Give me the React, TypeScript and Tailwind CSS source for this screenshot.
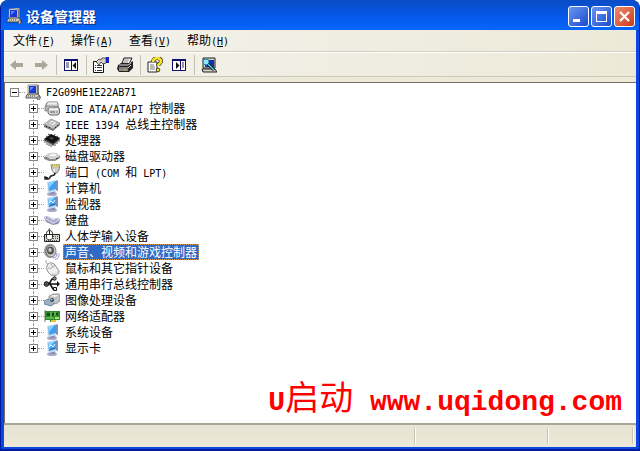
import { ReactNode, useState } from "react";

type DeviceNode = {
    label: string;
    icon: ReactNode;
};

const menus = [
    { label: "文件", key: "F" },
    { label: "操作", key: "A" },
    { label: "查看", key: "V" },
    { label: "帮助", key: "H" },
];

const Icon = ({ children }: { children: ReactNode }) => (
    <svg viewBox="0 0 16 16" className="size-4 shrink-0" aria-hidden="true">
        {children}
    </svg>
);

const PcIcon = () => (
    <Icon>
        <path d="M3 1l9-1 2 1v9l-2 1H3z" fill="#d8d5c8" />
        <path d="M13 1v10h-2" stroke="#222" fill="none" />
        <path d="M3 1h9v9H3z" fill="#e8e6dc" stroke="#777" strokeWidth=".7" />
        <path d="M4 2h7v7H4z" fill="#1838d8" />
        <path d="M5 3h4L5 7z" fill="#5c8cf8" />
        <path d="M1 12l2-2h10l2 2v2H1z" fill="#d0cdc0" stroke="#333" strokeWidth=".8" />
        <path d="M3 12h8" stroke="#555" strokeDasharray="1 1" />
        <path d="M12 15c0-3 3-4 3-1s-2 2-3 1" fill="#bbb" stroke="#333" strokeWidth=".7" />
    </Icon>
);

const IdeIcon = () => (
    <Icon>
        <path d="M2 6V4l2-2h9l1 2v3H2z" fill="#dcdcdc" stroke="#777" />
        <path d="M4 3h9" stroke="#fff" />
        <path d="M4 9l2-2h8l1.500 2v4L14 15H6l-2-2z" fill="#d6d6d6" stroke="#666" />
        <path d="M1 6h10v2H5l-2 3H1z" fill="#b4b4b4" stroke="#777" strokeWidth=".7" />
        <path d="M5 9h9" stroke="#fff" />
        <path d="M6 12h5" stroke="#555" />
        <path d="M12 12h2" stroke="#3aa83a" />
    </Icon>
);

const FirewireIcon = () => (
    <Icon>
        <path d="M0 9l7-6 9 4v2l-7 6-9-4z" fill="#777" />
        <path d="M0 8l7-5 9 4-7 6z" fill="#c4c4c4" stroke="#888" strokeWidth=".5" />
        <path d="M4 7l4-3 5 3-4 3z" fill="#eee" stroke="#999" strokeWidth=".6" />
        <path d="M2 10l1 1M5 11l1 1M11 12l1-1M13 10l1-1" stroke="#222" />
        <path d="M6 7l2-1 2 1-2 1z" fill="#aaa" />
    </Icon>
);

const CpuIcon = () => (
    <Icon>
        <path d="M1 8v3M3 9v4M5 10v4M7 11v4M9 12v2M11 10v4M13 8v4M15 7v3" stroke="#555" />
        <path d="M0 7l7-5 9 4-7 6z" fill="#111" />
        <path d="M0 7v1l9 5 7-6V6l-7 6z" fill="#333" />
        <path d="M2 4l2 1M4 2l2 1M11 2l-1 2M14 4l-2 1" stroke="#444" />
        <path d="M5 6l2-1 3 1-2 2z" fill="#444" />
    </Icon>
);

const DiskIcon = () => (
    <Icon>
        <path d="M0 9l5-4h7l4 3v2l-5 3H5L0 11z" fill="#8c8c8c" />
        <path d="M0 8l5-3h7l4 3-5 3H5z" fill="#d4d4d4" />
        <ellipse cx="9" cy="7" rx="4" ry="2" fill="#f4f4f4" stroke="#aaa" strokeWidth=".5" />
        <path d="M2 9l3 2" stroke="#666" />
        <path d="M12 11l2-1" stroke="#3b3b3b" />
    </Icon>
);

const PortIcon = () => (
    <Icon>
        <path d="M7 1h9l-1 5-2 3h-3L8 6z" fill="#cfcfcf" stroke="#666" strokeWidth=".8" />
        <path d="M7 0h9l-1 3H8z" fill="#f0e440" stroke="#999" strokeWidth=".5" />
        <path d="M8 1h7" stroke="#777" strokeDasharray="1 1" />
        <path d="M10 5v3" stroke="#fff" />
        <path d="M11 9c0 3-2 2-4 3s0 3-3 3H1v-2l3 1" fill="none" stroke="#222" strokeWidth="1.500" />
    </Icon>
);

const MonitorIcon = ({ glare }: { glare?: boolean }) => (
    <Icon>
        <ellipse cx="8" cy="14" rx="5" ry="2" fill="#a9a9c6" />
        <path d="M6 11h5v3H6z" fill="#8d8db4" />
        <path d="M3 2l9-2 2 1v10l-10 2z" fill="#c9d9ee" />
        <path d="M12 0l2 1v10l-2-1z" fill="#7b93bd" />
        <path d="M4 3l8-2v8l-7 2z" fill="#3aa0f0" />
        <path d="M4 3l7-2-6 7z" fill="#8dd2fc" />
        {glare && <path d="M5 7l2-2 2 2 2-3" fill="none" stroke="#fff" />}
        {glare && <path d="M6 10l5-2" stroke="#245daa" />}
    </Icon>
);

const KeyboardIcon = () => (
    <Icon>
        <path d="M0 5l3-1 6 3 6-1 1 3-2 3-5 1-7-3z" fill="#8b8bb5" />
        <path d="M0 5l3-1 6 3 6-1v3l-6 3-7-4z" fill="#cfcfe6" />
        <path d="M2 6l7 4 5-2M2 5l7 4 5-2" fill="none" stroke="#7777a5" strokeWidth=".7" strokeDasharray="1 .7" />
    </Icon>
);

const HidIcon = () => (
    <Icon>
        <path d="M.500 6.500h15v7H.500z" fill="#d8d8d0" stroke="#222" />
        <path d="M9 8.500h6M9 10.500h6M2 12.500h12" stroke="#555" strokeDasharray="1 1" />
        <path d="M5 3V1h1" fill="none" stroke="#333" />
        <path d="M2.500 5.500c0-4 6-4 6 0v4c0 3-6 3-6 0z" fill="#fff" stroke="#222" />
        <path d="M2.500 6.500h6M5.500 3v3.500" stroke="#222" />
    </Icon>
);

const SpeakerIcon = () => (
    <Icon>
        <ellipse cx="6" cy="7" rx="6" ry="7" fill="#999" />
        <ellipse cx="7" cy="7" rx="5" ry="6" fill="#d0d0d0" stroke="#555" strokeWidth=".7" />
        <ellipse cx="6.500" cy="6.500" rx="3.500" ry="4" fill="#555" />
        <ellipse cx="6" cy="6" rx="1.700" ry="2" fill="#ccc" />
        <path d="M9 14c3 0 4-2 4-5M11 15.500c3 0 4-3 4-6" fill="none" stroke="#8d93d8" />
    </Icon>
);

const MouseIcon = () => (
    <Icon>
        <path d="M3 0C0 2 3 4 5 4" fill="none" stroke="#999" />
        <path d="M3 6c1-4 6-4 8-1l4 6c1 4-5 6-8 4-3-2-5-6-4-9z" fill="#efefef" stroke="#8e8e8e" />
        <path d="M4 8c3 1 6-1 7-3M7 4l2 3" fill="none" stroke="#aaa" />
        <path d="M8 14c3 1 6-1 6-3" fill="none" stroke="#bbb" />
    </Icon>
);

const UsbIcon = () => (
    <Icon>
        <path d="M3 8h12M5 8l3-5h2M6 8l3 5h2" fill="none" stroke="#111" strokeWidth="1.500" />
        <circle cx="2.500" cy="8" r="2.300" fill="#555" stroke="#111" />
        <circle cx="10.500" cy="2.500" r="1.700" fill="#999" stroke="#111" />
        <path d="M9.500 11.500h3v3h-3z" fill="#ddd" stroke="#111" />
        <path d="M13 5l3 3-3 3z" fill="#111" />
    </Icon>
);

const CameraIcon = () => (
    <Icon>
        <path d="M0 9l4-2h6v5l-3 2-7-2z" fill="#9eb1c4" stroke="#56677a" strokeWidth=".7" />
        <path d="M5 4l4-2h6l1 2v5l-4 3-7-3z" fill="#c4c4c4" stroke="#777" strokeWidth=".7" />
        <path d="M6 4l4-1h5l-4 2z" fill="#f1f1f1" />
        <circle cx="8" cy="8" r="2.500" fill="#35516e" stroke="#ddd" strokeWidth=".7" />
        <circle cx="7.500" cy="7.500" r=".8" fill="#b8dcfc" />
    </Icon>
);

const NetworkIcon = () => (
    <Icon>
        <path d="M1 2v12" stroke="#777" />
        <path d="M1 3h15v9h-4v2H6v-2H1z" fill="#2c8a2c" />
        <path d="M3 5h3v3H3zM8 5h2v3H8zM12 5h2v2h-2z" fill="#124a12" />
        <path d="M2 10h8M7 4v6M11 4v4" stroke="#86d15a" />
        <path d="M7 13h5" stroke="#e6c72e" strokeWidth="2" />
        <path d="M11 9h4v2h-4z" fill="#bfe06a" />
    </Icon>
);

const devices: DeviceNode[] = [
    { label: "IDE ATA/ATAPI 控制器", icon: <IdeIcon /> },
    { label: "IEEE 1394 总线主控制器", icon: <FirewireIcon /> },
    { label: "处理器", icon: <CpuIcon /> },
    { label: "磁盘驱动器", icon: <DiskIcon /> },
    { label: "端口 (COM 和 LPT)", icon: <PortIcon /> },
    { label: "计算机", icon: <MonitorIcon /> },
    { label: "监视器", icon: <MonitorIcon glare /> },
    { label: "键盘", icon: <KeyboardIcon /> },
    { label: "人体学输入设备", icon: <HidIcon /> },
    { label: "声音、视频和游戏控制器", icon: <SpeakerIcon /> },
    { label: "鼠标和其它指针设备", icon: <MouseIcon /> },
    { label: "通用串行总线控制器", icon: <UsbIcon /> },
    { label: "图像处理设备", icon: <CameraIcon /> },
    { label: "网络适配器", icon: <NetworkIcon /> },
    { label: "系统设备", icon: <MonitorIcon /> },
    { label: "显示卡", icon: <MonitorIcon glare /> },
];

// Latin runs use a smaller monospace so they are half as wide as the Chinese glyphs
const Label = ({ text }: { text: string }) => (
    <>
        {text.split(/([\x20-\x7e]+)/).map((part, i) =>
            i % 2 ? (
                <span key={i} className="font-['DejaVu_Sans_Mono',monospace] text-[10px]">{part}</span>
            ) : (
                part
            )
        )}
    </>
);

const Expander = ({ open, name, onClick }: { open: boolean; name: string; onClick?: () => void }) => (
    <button
        aria-label={name}
        aria-expanded={open}
        onClick={onClick}
        className="flex size-[9px] shrink-0 items-center justify-center border border-[#848484] bg-white"
    >
        <svg viewBox="0 0 7 7" className="size-[7px]" shapeRendering="crispEdges">
            <path d="M1 3h5v1H1z" />
            {!open && <path d="M3 1h1v5H3z" />}
        </svg>
    </button>
);

const ToolButton = ({ name, disabled, children }: { name: string; disabled?: boolean; children: ReactNode }) => (
    <button aria-label={name} disabled={disabled} className="flex h-[22px] w-6 items-center justify-center">
        <svg viewBox="0 0 16 16" className="size-4">{children}</svg>
    </button>
);

const Divider = () => <div className="mr-[2px] ml-[3px] h-5 w-px bg-[#c5c2b2]" />;

const Toolbar = () => (
    <div className="flex h-[24px] items-center border-t border-white bg-linear-to-r from-[#f4f3ee] to-[#ece9d8] pl-px">
        <ToolButton name="后退" disabled>
            <path d="M1 8l6-5v3h7v4H7v3z" fill="#aca899" />
        </ToolButton>
        <ToolButton name="前进" disabled>
            <path d="M15 8L9 3v3H2v4h7v3z" fill="#aca899" />
        </ToolButton>
        <Divider />
        <ToolButton name="显示/隐藏控制台树">
            <path d="M1 2h14v12H1z" fill="#10106c" />
            <path d="M2 4h6v9H2zM9 4h5v9H9z" fill="#fff" />
            <path d="M3 6h3M3 8h3M3 10h3" stroke="#333" />
            <path d="M13 5v7L9.500 8.500z" fill="#111" />
        </ToolButton>
        <Divider />
        <ToolButton name="属性">
            <path d="M.500 4.500h10v11H.500z" fill="#fff" stroke="#111" />
            <path d="M2 8.500h1M4 8.500h5M2 10.500h1M4 10.500h5M2 13.500h1M4 13.500h5" stroke="#333" />
            <path d="M3 5l3-3 2 1 1-2h4v5l-3 1-2-2-2 3z" fill="#d4d0c4" stroke="#333" strokeWidth=".8" />
            <path d="M13 0h3v6h-3z" fill="#1b22b8" />
        </ToolButton>
        <ToolButton name="打印">
            <path d="M5 6l2-5h8l-3 6z" fill="#fff" stroke="#111" />
            <path d="M7 3h5M7 5h4" stroke="#555" strokeWidth=".7" />
            <path d="M1 8l3-2h9l3-2v7l-4 4H2l-2-3z" fill="#222" />
            <path d="M2 8h9l3-2M2 11h9l3-3" fill="none" stroke="#ddd" />
            <path d="M2 13h9" stroke="#f2f2e8" />
            <path d="M7 13h2" stroke="#d8c820" />
        </ToolButton>
        <Divider />
        <ToolButton name="帮助">
            <path d="M1 5h9v10H1z" fill="#fff" stroke="#222" />
            <path d="M3 8h4M3 10h5M3 12h5" stroke="#555" strokeWidth=".8" />
            <path d="M6 5c0-5 8-5 8-1 0 3-3 3-3 5" fill="none" stroke="#222" strokeWidth="4" />
            <path d="M6 5c0-5 8-5 8-1 0 3-3 3-3 5" fill="none" stroke="#f6e623" strokeWidth="2.700" />
            <circle cx="11" cy="13" r="1.800" fill="#f6e623" stroke="#222" strokeWidth=".8" />
        </ToolButton>
        <ToolButton name="显示/隐藏操作窗格">
            <path d="M1 2h14v12H1z" fill="#10106c" />
            <path d="M2 4h7v9H2zM10 4h4v9h-4z" fill="#fff" />
            <path d="M5 5v7l3.500-3.500z" fill="#111" />
            <path d="M11 6h2M11 8h2M11 10h2" stroke="#333" />
        </ToolButton>
        <Divider />
        <ToolButton name="扫描检测硬件改动">
            <path d="M2 1h12v10H2z" fill="#d4d0c4" stroke="#222" />
            <path d="M4 3h9v7H4z" fill="#1530a8" />
            <path d="M1 12h13l2 3H2z" fill="#d4d0c4" stroke="#222" />
            <circle cx="5" cy="5" r="3" fill="#8ce8f4" stroke="#1b7fa6" />
            <path d="M7 7l6 6" stroke="#111" strokeWidth="3" />
            <path d="M7 7l6 6" stroke="#4cc8f0" strokeWidth="1.500" />
        </ToolButton>
    </div>
);

const captionButton = "flex size-[21px] items-center justify-center rounded-[3px] border border-white bg-linear-to-br";

const TitleBar = () => (
    <header className="flex h-[30px] items-center rounded-t-[7px] bg-linear-to-b from-[#0a4cc4] via-[#0557e8] to-[#0466fc] pt-0.5 pr-1 pl-[5px]">
        <PcIcon />
        <h1 className="ml-1 flex-1 text-[14px] leading-4 font-bold text-white [text-shadow:1px_1px_#0a2c80]">设备管理器</h1>
        <div className="flex gap-[2px]">
            <button aria-label="最小化" className={`${captionButton} from-[#6c95f2] to-[#1c48cc]`}>
                <svg viewBox="0 0 19 19" className="size-[19px]"><path d="M4 12h7v3H4z" fill="#fff" /></svg>
            </button>
            <button aria-label="最大化" className={`${captionButton} from-[#6c95f2] to-[#1c48cc]`}>
                <svg viewBox="0 0 19 19" className="size-[19px]">
                    <path d="M4 4h11v11H4zM5 7v7h9V7z" fill="#fff" fillRule="evenodd" />
                </svg>
            </button>
            <button aria-label="关闭" className={`${captionButton} from-[#ee8a6c] to-[#cc3614]`}>
                <svg viewBox="0 0 19 19" className="size-[19px]"><path d="M5 5l9 9M14 5l-9 9" stroke="#fff" strokeWidth="2.200" /></svg>
            </button>
        </div>
    </header>
);

export default function App() {
    const [open, setOpen] = useState(true);
    const [selected, setSelected] = useState("声音、视频和游戏控制器");

    return (
        <div className="flex min-h-screen flex-col rounded-t-[8px] border-x border-b-2 border-[#001c9c] bg-[#0640d0] font-['Noto_Sans_CJK_SC',sans-serif] text-[12px] text-black">
            <TitleBar />
            <div className="flex flex-1 flex-col border-x-3 border-b-2 border-[#0a48e0] bg-[#ece9d8]">
                <nav className="flex h-[22px] items-center border-b border-[#d2cfbf] bg-linear-to-r from-[#f4f3ee] to-[#ece9d8] pt-px pl-[9px]">
                    {menus.map((menu) => (
                        <button key={menu.key} className="w-[58px] text-left leading-4 whitespace-nowrap">
                            {menu.label}
                            <span className="font-['DejaVu_Sans_Mono',monospace] text-[10px]">
                                (<u>{menu.key}</u>)
                            </span>
                        </button>
                    ))}
                </nav>
                <Toolbar />
                <div className="h-[6px] border-t border-[#cbc8b8]" />

                <main className="flex flex-1 flex-col border-t border-l border-[#716f64] bg-white pt-px pl-[5px]">
                    <div className="flex h-4 items-center">
                        <Expander open={open} name="F2G09HE1E22AB71" onClick={() => setOpen(!open)} />
                        <div className="w-[6px] border-t border-dotted border-[#999]" />
                        <PcIcon />
                        <span className="ml-[5px] leading-4"><Label text="F2G09HE1E22AB71" /></span>
                    </div>
                    {open && (
                        <ul className="pl-[19px]">
                            {devices.map((device, i) => (
                                <li key={device.label} className="flex h-4 items-center">
                                    <div className="flex h-4 w-[9px] flex-col items-center">
                                        <div className="h-1 w-px border-l border-dotted border-[#999]" />
                                        <Expander open={false} name={device.label} />
                                        {i < devices.length - 1 && (
                                            <div className="h-[3px] w-px border-l border-dotted border-[#999]" />
                                        )}
                                    </div>
                                    <div className="w-[6px] border-t border-dotted border-[#999]" />
                                    {device.icon}
                                    <button
                                        onClick={() => setSelected(device.label)}
                                        className={`ml-[3px] h-4 px-px leading-[14px] whitespace-nowrap border border-dotted ${
                                            selected === device.label
                                                ? "border-[#d89a4a] bg-[#316ac5] text-white"
                                                : "border-transparent"
                                        }`}
                                    >
                                        <Label text={device.label} />
                                    </button>
                                </li>
                            ))}
                        </ul>
                    )}
                    <p className="mt-auto self-end pr-[14px] font-['Liberation_Mono','Noto_Sans_CJK_SC',monospace] text-[28px] leading-10 font-bold whitespace-nowrap text-[#f00]">
                        U<span className="text-[34px] font-normal">启动</span> www.uqidong.com
                    </p>
                </main>

                <footer className="flex h-[24px] border-t-2 border-[#aaa798] bg-linear-to-b from-[#e6e3d2] to-[#ece9d8] py-[3px]">
                    <div className="flex-1 border-r border-[#c5c2b2]" />
                    <div className="w-[133px] border-r border-l border-[#c5c2b2] border-l-white" />
                    <div className="w-[85px] border-r border-l border-[#c5c2b2] border-l-white" />
                    <div className="w-[3px] border-l border-white" />
                </footer>
            </div>
        </div>
    );
}
